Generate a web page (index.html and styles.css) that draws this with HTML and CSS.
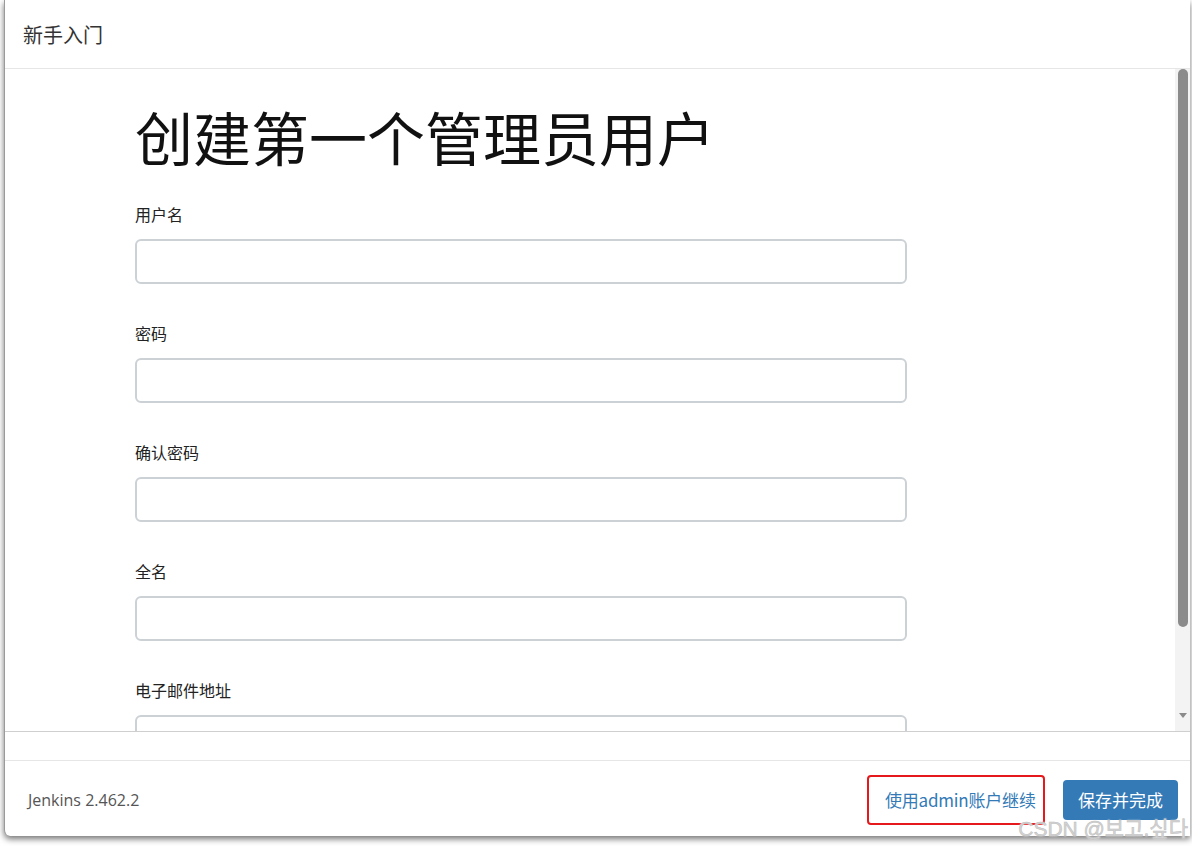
FILE: index.html
```html
<!DOCTYPE html>
<html lang="zh-CN">
<head>
    <meta charset="UTF-8">
    <title>新手入门</title>
    <link rel="stylesheet" href="styles.css">
</head>
<body>
    <div class="dialog">
        <div class="dialog-header">新手入门</div>

        <div class="dialog-body">
            <div class="form-area">
                <h1 class="form-title">创建第一个管理员用户</h1>
                <div class="field">
                    <label>用户名</label>
                    <input type="text" class="text-input">
                </div>
                <div class="field">
                    <label>密码</label>
                    <input type="password" class="text-input">
                </div>
                <div class="field">
                    <label>确认密码</label>
                    <input type="password" class="text-input">
                </div>
                <div class="field">
                    <label>全名</label>
                    <input type="text" class="text-input">
                </div>
                <div class="field">
                    <label>电子邮件地址</label>
                    <input type="text" class="text-input">
                </div>
            </div>
            <div class="scrollbar">
                <div class="scroll-thumb"></div>
                <div class="scroll-arrow"></div>
            </div>
        </div>

        <div class="dialog-gap"></div>

        <div class="dialog-footer">
            <span class="version">Jenkins 2.462.2</span>
            <div class="actions">
                <a class="skip-link" href="#">使用admin账户继续</a>
                <button class="btn-primary">保存并完成</button>
            </div>
        </div>
    </div>
    <div class="watermark">CSDN @보고.싶다</div>
</body>
</html>
```

FILE: styles.css
```css
html, body {
    margin: 0;
    height: 100%;
    background-color: #ffffff;
    font-family: "Noto Sans CJK SC", "Noto Sans", sans-serif;
    color: #333;
    overflow: hidden;
}

body {
    position: relative;
}

.dialog {
    margin-left: 4px;
    margin-right: 2px;
    height: 836px;
    border-left: 1px solid #9a9a9a;
    border-bottom-left-radius: 6px;
    box-shadow: 0 3px 6px rgba(0, 0, 0, 0.55);
    background-color: #fff;
    display: flex;
    flex-direction: column;
}

.dialog-header {
    height: 69px;
    box-sizing: border-box;
    padding-left: 18px;
    display: flex;
    align-items: center;
    font-size: 20px;
    color: #333;
    border-bottom: 1px solid #e6e6e6;
}

.dialog-body {
    height: 662px;
    display: flex;
    overflow: hidden;
}

.form-area {
    flex-grow: 1;
    padding: 33px 0 0 130px;
    overflow: hidden;
}

.form-title {
    margin: 0 0 34px 0;
    font-size: 58px;
    line-height: 68px;
    font-weight: 400;
    color: #111;
}

.field {
    margin-bottom: 39px;
}

.field label {
    display: block;
    font-size: 16px;
    line-height: 20px;
    color: #222;
    margin-bottom: 15px;
}

.text-input {
    display: block;
    width: 772px;
    height: 45px;
    box-sizing: border-box;
    border: 2px solid #ccd1d6;
    border-radius: 6px;
    outline: none;
}

.scrollbar {
    width: 15px;
    flex-shrink: 0;
    background-color: #f3f3f3;
    position: relative;
}

.scroll-thumb {
    margin: 0 2px 0 3px;
    height: 558px;
    background-color: #8b8b8b;
    border-radius: 5px;
}

.scroll-arrow {
    position: absolute;
    left: 4px;
    bottom: 13px;
    width: 0;
    height: 0;
    border-left: 4px solid transparent;
    border-right: 4px solid transparent;
    border-top: 5px solid #8a8a8a;
}

.dialog-gap {
    height: 30px;
    border-top: 1px solid #cfcfcf;
    border-bottom: 1px solid #e6e6e6;
    box-sizing: border-box;
    flex-shrink: 0;
}

.dialog-footer {
    flex-grow: 1;
    display: flex;
    align-items: center;
    justify-content: space-between;
    padding: 0 12px 0 23px;
}

.version {
    font-family: "Open Sans", "Noto Sans", sans-serif;
    font-size: 16px;
    color: #555;
    margin-top: 2px;
}

.actions {
    display: flex;
    align-items: center;
}

.skip-link {
    display: flex;
    align-items: center;
    box-sizing: border-box;
    width: 178px;
    height: 50px;
    padding-left: 16px;
    border: 2px solid #e5191c;
    border-radius: 4px;
    color: #337ab7;
    text-decoration: none;
    font-size: 17px;
    letter-spacing: -0.2px;
    white-space: nowrap;
    margin-right: 18px;
    margin-top: 2px;
}

.btn-primary {
    width: 115px;
    height: 40px;
    border: none;
    border-radius: 4px;
    background-color: #337ab7;
    color: #fff;
    font-family: "Noto Sans CJK SC", sans-serif;
    font-size: 17px;
    margin-top: 2px;
}

.watermark {
    position: absolute;
    right: 4px;
    top: 812px;
    font-family: "Liberation Sans", "Noto Sans CJK KR", sans-serif;
    font-size: 21px;
    color: #d4d4d4;
    -webkit-text-stroke: 0.5px #bdbdbd;
    text-shadow: 0 0 2px #fff;
}
```
